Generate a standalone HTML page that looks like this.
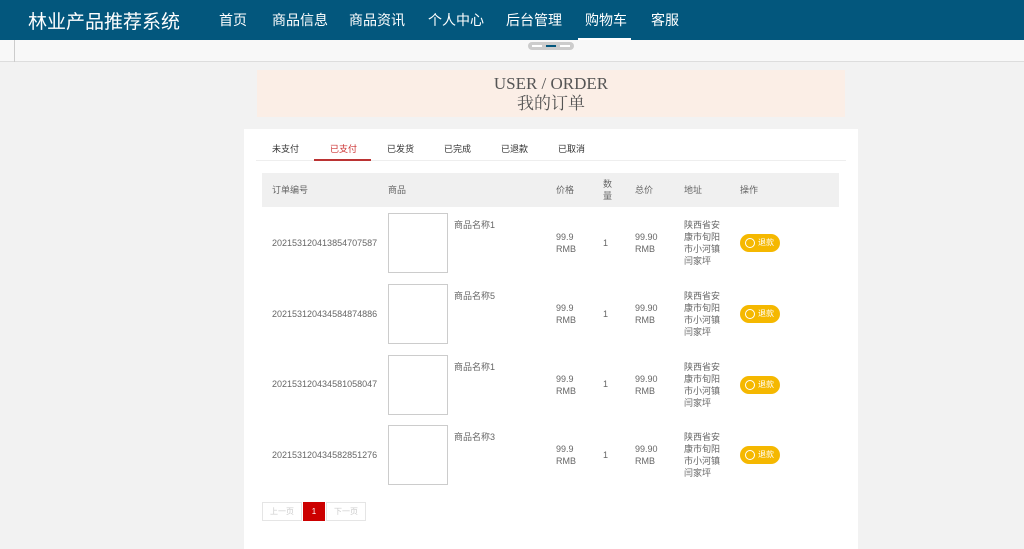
<!DOCTYPE html>
<html><head><meta charset="utf-8"><style>
*{margin:0;padding:0;box-sizing:border-box}
body{width:1024px;height:547px;overflow:hidden;background:#f2f2f2;font-family:"Liberation Sans","Noto Sans CJK SC",sans-serif;position:relative}
.hd{position:absolute;left:0;top:0;width:1024px;height:40px;background:#03577d}
.logo{position:absolute;left:28px;top:7px;color:#fff;font-size:19px}
.nav{position:absolute;top:10px;color:#fff;font-size:14px}
.ul{position:absolute;left:578px;top:38px;width:53px;height:2px;background:#fff}
.band{position:absolute;left:0;top:40px;width:1024px;height:22px;background:#f8f8f8;border-bottom:1px solid #ddd}
.vl{position:absolute;left:14px;top:40px;width:1px;height:22px;background:#ccc}
.dots{position:absolute;left:528px;top:42px;width:46px;height:8px;border-radius:4px;background:#ccc}
.dots i{position:absolute;top:3px;height:2px;width:10px;background:#fff}
.tb{position:absolute;left:257px;top:70px;width:588px;height:47px;background:#fbeee6;text-align:center;font-family:"Liberation Serif","Noto Serif CJK SC",serif;color:#555}
.card{position:absolute;left:244px;top:129px;width:614px;height:420px;background:#fff}
.t{position:absolute;font-size:9px;color:#666;line-height:12px}
.tab{position:absolute;top:142px;font-size:9px;color:#333}
.img{position:absolute;left:388px;width:60px;height:60px;border:1px solid #ccc;background:#fff}
.btn{position:absolute;left:740px;width:40px;height:18px;border-radius:9px;background:#f5b800;color:#fff;font-size:8px;line-height:18px;padding-left:18px}
.btn:before{content:"";position:absolute;left:5px;top:4px;width:8px;height:8px;border-radius:50%;border:1px solid #fff}
.pg{position:absolute;top:502px;height:19px;border:1px solid #e5e5e5;font-size:8px;color:#ccc;line-height:17px;text-align:center}
</style></head><body>
<div class="hd"><div class="logo">林业产品推荐系统</div>
<div class="nav" style="left:219px">首页</div><div class="nav" style="left:272px">商品信息</div><div class="nav" style="left:349px">商品资讯</div><div class="nav" style="left:428px">个人中心</div><div class="nav" style="left:506px">后台管理</div><div class="nav" style="left:585px">购物车</div><div class="nav" style="left:651px">客服</div>
<div class="ul"></div></div>
<div class="band"></div><div class="vl"></div>
<div class="dots"><i style="left:4px"></i><i style="left:18px;background:#03577d"></i><i style="left:32px"></i></div>
<div class="tb"><div style="font-size:17px;padding-top:4px;line-height:20px">USER / ORDER</div><div style="font-size:17px;line-height:20px">我的订单</div></div>
<div class="card"></div>
<div class="tab" style="left:272px">未支付</div>
<div class="tab" style="left:330px;color:#c33">已支付</div>
<div class="tab" style="left:387px">已发货</div>
<div class="tab" style="left:444px">已完成</div>
<div class="tab" style="left:501px">已退款</div>
<div class="tab" style="left:558px">已取消</div>
<div style="position:absolute;left:256px;top:160px;width:590px;height:1px;background:#eee"></div>
<div style="position:absolute;left:314px;top:159px;width:57px;height:2px;background:#b33"></div>
<div style="position:absolute;left:262px;top:173px;width:577px;height:34px;background:#f0f0f0"></div>
<div class="t" style="left:272px;top:184px">订单编号</div>
<div class="t" style="left:388px;top:184px">商品</div>
<div class="t" style="left:556px;top:184px">价格</div>
<div class="t" style="left:603px;top:178px">数<br>量</div>
<div class="t" style="left:635px;top:184px">总价</div>
<div class="t" style="left:684px;top:184px">地址</div>
<div class="t" style="left:740px;top:184px">操作</div>

<div class="t" style="left:272px;top:237px">202153120413854707587</div>
<div class="img" style="top:213px"></div><div class="t" style="left:454px;top:219px">商品名称1</div>
<div class="t" style="left:556px;top:231px">99.9<br>RMB</div><div class="t" style="left:603px;top:237px">1</div><div class="t" style="left:635px;top:231px">99.90<br>RMB</div>
<div class="t" style="left:684px;top:219px">陕西省安<br>康市旬阳<br>市小河镇<br>闫家坪</div><div class="btn" style="top:234px">退款</div>

<div class="t" style="left:272px;top:308px">202153120434584874886</div>
<div class="img" style="top:284px"></div><div class="t" style="left:454px;top:290px">商品名称5</div>
<div class="t" style="left:556px;top:302px">99.9<br>RMB</div><div class="t" style="left:603px;top:308px">1</div><div class="t" style="left:635px;top:302px">99.90<br>RMB</div>
<div class="t" style="left:684px;top:290px">陕西省安<br>康市旬阳<br>市小河镇<br>闫家坪</div><div class="btn" style="top:305px">退款</div>

<div class="t" style="left:272px;top:378px">202153120434581058047</div>
<div class="img" style="top:355px"></div><div class="t" style="left:454px;top:361px">商品名称1</div>
<div class="t" style="left:556px;top:373px">99.9<br>RMB</div><div class="t" style="left:603px;top:378px">1</div><div class="t" style="left:635px;top:373px">99.90<br>RMB</div>
<div class="t" style="left:684px;top:361px">陕西省安<br>康市旬阳<br>市小河镇<br>闫家坪</div><div class="btn" style="top:376px">退款</div>

<div class="t" style="left:272px;top:449px">202153120434582851276</div>
<div class="img" style="top:425px"></div><div class="t" style="left:454px;top:431px">商品名称3</div>
<div class="t" style="left:556px;top:443px">99.9<br>RMB</div><div class="t" style="left:603px;top:449px">1</div><div class="t" style="left:635px;top:443px">99.90<br>RMB</div>
<div class="t" style="left:684px;top:431px">陕西省安<br>康市旬阳<br>市小河镇<br>闫家坪</div><div class="btn" style="top:446px">退款</div>

<div class="pg" style="left:262px;width:40px">上一页</div>
<div class="pg" style="left:303px;width:22px;background:#c00;border-color:#c00;color:#fff">1</div>
<div class="pg" style="left:326px;width:40px">下一页</div>
</body></html>
